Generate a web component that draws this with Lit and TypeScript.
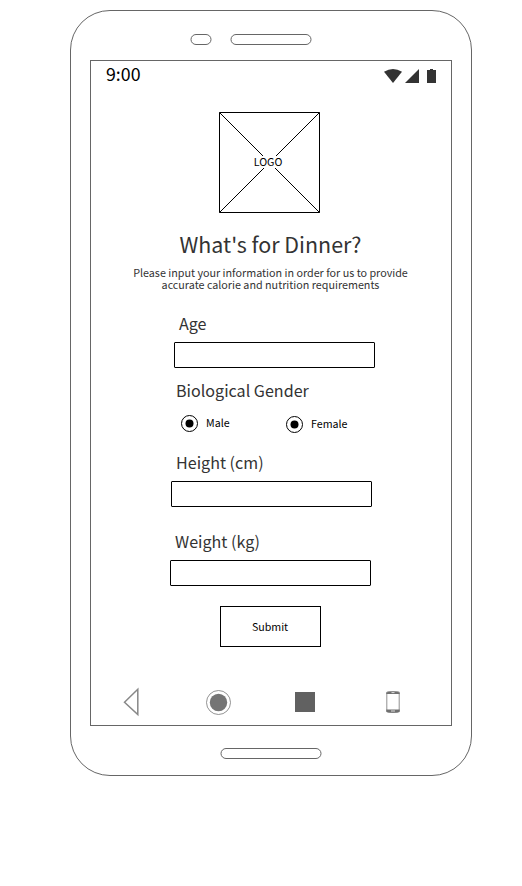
import { LitElement, html, css } from "lit";
import { customElement, property } from "lit/decorators.js";

@customElement("text-field")
class TextField extends LitElement {
  @property() label = "";

  static styles = css`
    :host { display: block; width: 201px; }
    label { display: block; height: 24px; line-height: 24px; font-size: 16.1px; color: #333; white-space: nowrap; padding-left: 5px; }
    input { display: block; box-sizing: border-box; width: 201px; height: 26px; margin: 7px 0 0; padding: 0 6px; border: 1px solid #000; border-radius: 1px; background: #fff; outline: none; font: inherit; }
  `;

  render() {
    return html`<label for="field">${this.label}</label><input id="field" type="text" />`;
  }
}

@customElement("radio-option")
class RadioOption extends LitElement {
  @property() label = "";

  static styles = css`
    :host { display: flex; align-items: center; gap: 8px; height: 17px; font-size: 8pt; line-height: 15px; color: #000; }
    svg { display: block; }
    span { white-space: nowrap; margin-top: -2px; }
  `;

  render() {
    return html`
      <svg width="17" height="17" viewBox="0 0 17 17">
        <circle cx="8.5" cy="8.5" r="8" fill="#fff" stroke="#000" />
        <circle cx="8.5" cy="8.5" r="4" />
      </svg>
      <span>${this.label}</span>
    `;
  }
}

@customElement("app-root")
class AppRoot extends LitElement {
  static styles = css`
    :host { display: block; box-sizing: border-box; height: 886px; padding: 10px 0 0 70px; background: #fff; font-family: "Noto Sans CJK SC", "Noto Sans", sans-serif; overflow: hidden; }
    svg { display: block; flex: none; }
    .phone { box-sizing: border-box; width: 402px; height: 766px; border: 1px solid #666; border-radius: 40px; padding: 0 19px; display: flex; flex-direction: column; }
    .top { display: flex; flex: none; height: 49px; box-sizing: border-box; padding: 23px 0 0 100px; gap: 18px; }
    .pill { fill: none; stroke: #666; }
    .home { margin: 22px 0 0 130px; }
    .screen { box-sizing: border-box; flex: none; width: 362px; height: 666px; border: 1px solid #666; display: flex; flex-direction: column; }
    .status { display: flex; height: 24px; justify-content: space-between; padding: 0 14px 0 15px; }
    .time { font-size: 17.8px; line-height: 24px; color: #000; }
    .logo { display: grid; width: 101px; height: 101px; margin: 27px 0 0 128px; place-items: center; }
    .logo > * { grid-area: 1 / 1; }
    .logo span { background: #fff; font-size: 8pt; line-height: 12px; padding: 0 1px; margin: -1px 0 0 -3px; }
    h1 { margin: 16px 0 0; padding-right: 1px; font-size: 21.45px; line-height: 30px; font-weight: 400; text-align: center; color: #333; white-space: nowrap; }
    .intro { margin: 8px 0 0; padding-right: 1px; font-size: 10.76px; line-height: 12px; text-align: center; color: #333; }
    form { display: flex; flex-direction: column; flex: none; padding-top: 20px; }
    .age { margin-left: 83px; }
    .legend { margin: 10px 0 0 85px; font-size: 16.1px; line-height: 24px; color: #333; }
    .options { display: flex; height: 18px; margin: 13px 0 0 90px; }
    .male { width: 105px; }
    .female { margin-top: 1px; }
    .height { margin: 17px 0 0 80px; }
    .weight { margin: 22px 0 0 79px; }
    button { box-sizing: border-box; width: 101px; height: 41px; margin: 20px 0 0 129px; padding: 0 1px 0 0; border: 1px solid #000; background: #fff; color: #000; font: 8pt/15px "Noto Sans CJK SC", sans-serif; }
    nav { display: flex; align-items: center; height: 30px; margin-top: 40px; padding-left: 31px; }
    .circle { margin-left: 66px; }
    .square { margin-left: 63px; }
    .device { margin-left: 70px; }
  `;

  private pill(width: number, name = "") {
    return html`
      <svg class="pill ${name}" width=${width + 2} height="11">
        <rect x="1" y=".5" width=${width} height="10" rx="5" />
      </svg>
    `;
  }

  render() {
    return html`
      <div class="phone">
        <div class="top">${this.pill(20)}${this.pill(80)}</div>
        <main class="screen">
          <header class="status">
            <span class="time">9:00</span>
            <svg width="53" height="24" viewBox="0 0 53 24" fill="#333">
              <path d="M0 10.8Q9 5.2 18 10.8L9 22Z" />
              <path d="M35 8V22H21Z" />
              <path d="M43 9H46V8H49V9H52V22H43Z" />
            </svg>
          </header>
          <div class="logo">
            <svg width="101" height="101" viewBox="0 0 101 101" fill="none" stroke="#000">
              <path d="M.5 .5H100.5V100.5H.5ZM.5 .5L100.5 100.5M100.5 .5L.5 100.5" />
            </svg>
            <span>LOGO</span>
          </div>
          <h1>What's for Dinner?</h1>
          <p class="intro">Please input your information in order for us to provide<br />accurate calorie and nutrition requirements</p>
          <form @submit=${(e: Event) => e.preventDefault()}>
            <text-field class="age" label="Age"></text-field>
            <div class="legend">Biological Gender</div>
            <div class="options">
              <radio-option class="male" label="Male"></radio-option>
              <radio-option class="female" label="Female"></radio-option>
            </div>
            <text-field class="height" label="Height (cm)"></text-field>
            <text-field class="weight" label="Weight (kg)"></text-field>
            <button>Submit</button>
          </form>
          <nav>
            <svg width="18" height="30" viewBox="0 0 18 30" fill="none" stroke="#888" stroke-width="1.5">
              <path d="M2.5 15.2L15.8 2.2V27.5Z" />
            </svg>
            <svg class="circle" width="25" height="25" viewBox="0 0 25 25">
              <circle cx="12.5" cy="12.5" r="12" fill="none" stroke="#777" stroke-width=".8" />
              <circle cx="12.5" cy="12.5" r="8.7" fill="#757575" />
            </svg>
            <svg class="square" width="22" height="20" viewBox="0 0 22 20"><path fill="#616161" d="M1 0H21V20H1Z" /></svg>
            <svg class="device" width="14" height="22" viewBox="0 0 14 22">
              <rect x=".75" y=".75" width="12.5" height="20.5" rx="1.8" fill="#fff" stroke="#aaa" stroke-width="1.3" />
              <path fill="#707070" d="M.3 3V1.6Q7-.8 13.7 1.6V3ZM.3 18.5H13.7V20.8Q7 22.8.3 20.8Z" />
              <path d="M5.5 1.6H8.5M5 20H9" stroke="#ddd" />
            </svg>
          </nav>
        </main>
        ${this.pill(100, "home")}
      </div>
    `;
  }
}
